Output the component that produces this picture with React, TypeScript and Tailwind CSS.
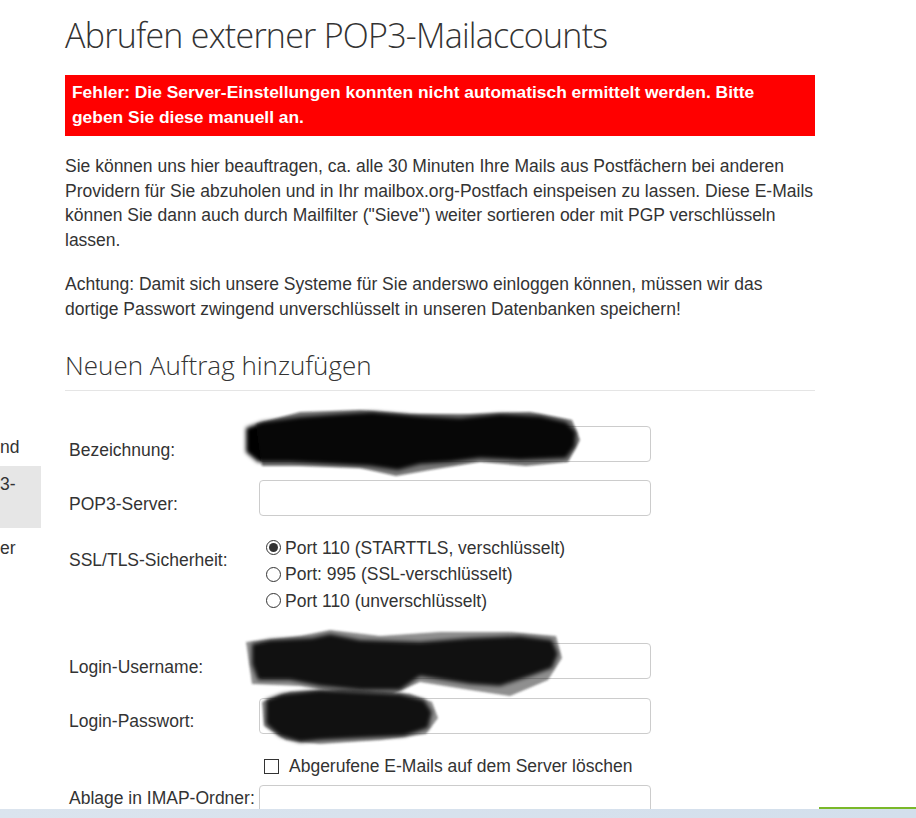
import React from "react";

const sans = { fontFamily: '"Liberation Sans", Arial, sans-serif' };

function Redactions() {
  return (
    <svg className="absolute left-0 top-0 pointer-events-none" width="916" height="818" viewBox="0 0 916 818">
      <defs>
        <filter id="soft" x="-10%" y="-30%" width="120%" height="160%">
          <feGaussianBlur stdDeviation="2.2" />
        </filter>
        <filter id="soft2" x="-10%" y="-30%" width="120%" height="160%">
          <feGaussianBlur stdDeviation="1" />
        </filter>
      </defs>
      {/* Bezeichnung blob */}
      <g filter="url(#soft)">
        <path d="M246 428 L262 422 L300 417 L340 414 L372 412 L420 416 L460 418 L500 414 L540 416 L566 422 L576 432 L575 446 L566 458 L520 460 L480 458 L450 462 L420 464 L398 470 L370 466 L330 464 L290 462 L258 462 L246 452 Z" fill="#000" />
      </g>
      <g filter="url(#soft2)" opacity="0.55">
        <path d="M256 424 L300 412 L360 410 L410 414 L470 414 L530 412 L572 420 L580 440 L568 462 L526 466 L480 462 L430 470 L396 476 L360 468 L300 466 L262 466 Z" fill="#111" />
      </g>
      {/* Username blob */}
      <g filter="url(#soft)">
        <path d="M252 644 L270 640 L312 638 L330 634 L360 640 L420 642 L470 638 L520 636 L552 640 L558 654 L552 668 L530 676 L500 686 L470 684 L420 676 L400 690 L360 690 L320 686 L290 680 L258 680 L252 664 Z" fill="#000" />
      </g>
      <g filter="url(#soft2)" opacity="0.5">
        <path d="M246 642 L300 636 L330 630 L380 636 L440 632 L510 632 L556 636 L562 658 L548 680 L510 696 L470 690 L420 682 L392 694 L340 692 L300 686 L252 684 Z" fill="#222" />
      </g>
      {/* Password blob */}
      <g filter="url(#soft)">
        <path d="M266 700 L282 694 L320 690 L360 692 L400 694 L424 700 L432 712 L428 728 L404 736 L360 738 L320 740 L300 742 L280 736 L266 724 Z" fill="#000" />
      </g>
      <g filter="url(#soft2)" opacity="0.5">
        <path d="M262 702 L290 692 L350 690 L410 694 L432 702 L438 718 L426 734 L380 740 L320 744 L286 740 L264 726 Z" fill="#222" />
      </g>
    </svg>
  );
}

function Radio({ checked, label }: { checked?: boolean; label: string }) {
  return (
    <div className="flex items-center h-[26.5px]">
      <span className="ml-[7px] mr-[4px] w-[15px] h-[15px] rounded-full border border-[#333] bg-white flex items-center justify-center">
        {checked && <span className="w-[9px] h-[9px] rounded-full bg-[#333]" />}
      </span>
      <span>{label}</span>
    </div>
  );
}

function Input() {
  return <div className="w-[392px] h-[36px] border border-[#ccc] rounded-[4px] bg-white" />;
}

export default function App() {
  return (
    <div className="relative w-[916px] h-[818px] overflow-hidden bg-white text-[#333]" style={sans}>
      <div className="flex">
        {/* sidebar fragments */}
        <div className="w-[41px] text-[17.5px] leading-[24px] pt-[435px]">
          <div className="h-[31px]">nd</div>
          <div className="h-[62px] bg-[#e6e6e6] pt-[6px]">3-</div>
          <div className="pt-[8px]">er</div>
        </div>

        <div className="ml-[24px] w-[750px]">
          <h1
            className="pt-[15px] text-[34px] leading-[40px] font-light tracking-[-0.75px]"
            style={{ fontFamily: '"Open Sans", sans-serif' }}
          >
            Abrufen externer POP3-Mailaccounts
          </h1>
          <div className="mt-[20px] h-[61px] bg-[#ff0000] text-white font-bold text-[17.4px] leading-[25px] px-[7px] pt-[5px]">
            Fehler: Die Server-Einstellungen konnten nicht automatisch ermittelt werden. Bitte
            <br />
            geben Sie diese manuell an.
          </div>
          <p className="mt-[18px] text-[17.5px] leading-[24.6px]">
            Sie können uns hier beauftragen, ca. alle 30 Minuten Ihre Mails aus Postfächern bei anderen Providern für Sie abzuholen und in Ihr mailbox.org-Postfach einspeisen zu lassen. Diese E-Mails können Sie dann auch durch Mailfilter ("Sieve") weiter sortieren oder mit PGP verschlüsseln lassen.
          </p>
          <p className="mt-[20px] text-[17.5px] leading-[24.6px]">
            Achtung: Damit sich unsere Systeme für Sie anderswo einloggen können, müssen wir das dortige Passwort zwingend unverschlüsselt in unseren Datenbanken speichern!
          </p>
          <h2
            className="mt-[27px] text-[26px] leading-[32px] font-light pb-[9px] border-b border-[#e5e5e5]"
            style={{ fontFamily: '"Open Sans", sans-serif' }}
          >
            Neuen Auftrag hinzufügen
          </h2>

          <div className="text-[17.5px] leading-[24px]">
            <div className="mt-[35px] flex">
              <div className="w-[194px] pl-[4px] pt-[12px]">Bezeichnung:</div>
              <Input />
            </div>
            <div className="mt-[18px] flex">
              <div className="w-[194px] pl-[4px] pt-[12px]">POP3-Server:</div>
              <Input />
            </div>
            <div className="mt-[19px] flex">
              <div className="w-[194px] pl-[4px] pt-[13px]">SSL/TLS-Sicherheit:</div>
              <div>
                <Radio checked label="Port 110 (STARTTLS, verschlüsselt)" />
                <Radio label="Port: 995 (SSL-verschlüsselt)" />
                <Radio label="Port 110 (unverschlüsselt)" />
              </div>
            </div>
            <div className="mt-[29px] flex">
              <div className="w-[194px] pl-[4px] pt-[12px]">Login-Username:</div>
              <Input />
            </div>
            <div className="mt-[19px] flex">
              <div className="w-[194px] pl-[4px] pt-[11px]">Login-Passwort:</div>
              <Input />
            </div>
            <div className="mt-[20px] flex items-center h-[24px]">
              <div className="w-[194px]" />
              <span className="ml-[5px] w-[15px] h-[15px] border border-[#333] bg-white" />
              <span className="ml-[10px]">Abgerufene E-Mails auf dem Server löschen</span>
            </div>
            <div className="mt-[7px] flex">
              <div className="w-[194px] pl-[4px] pt-[1px]">Ablage in IMAP-Ordner:</div>
              <Input />
            </div>
          </div>
        </div>
      </div>

      <Redactions />

      <div className="absolute left-[819px] top-[807px] w-[97px] h-[2px] bg-[#7ab829]" />
      <div className="absolute left-0 bottom-0 w-full h-[9px] bg-gradient-to-r from-[#dbe4ee] to-[#d3dfec]" />
    </div>
  );
}
